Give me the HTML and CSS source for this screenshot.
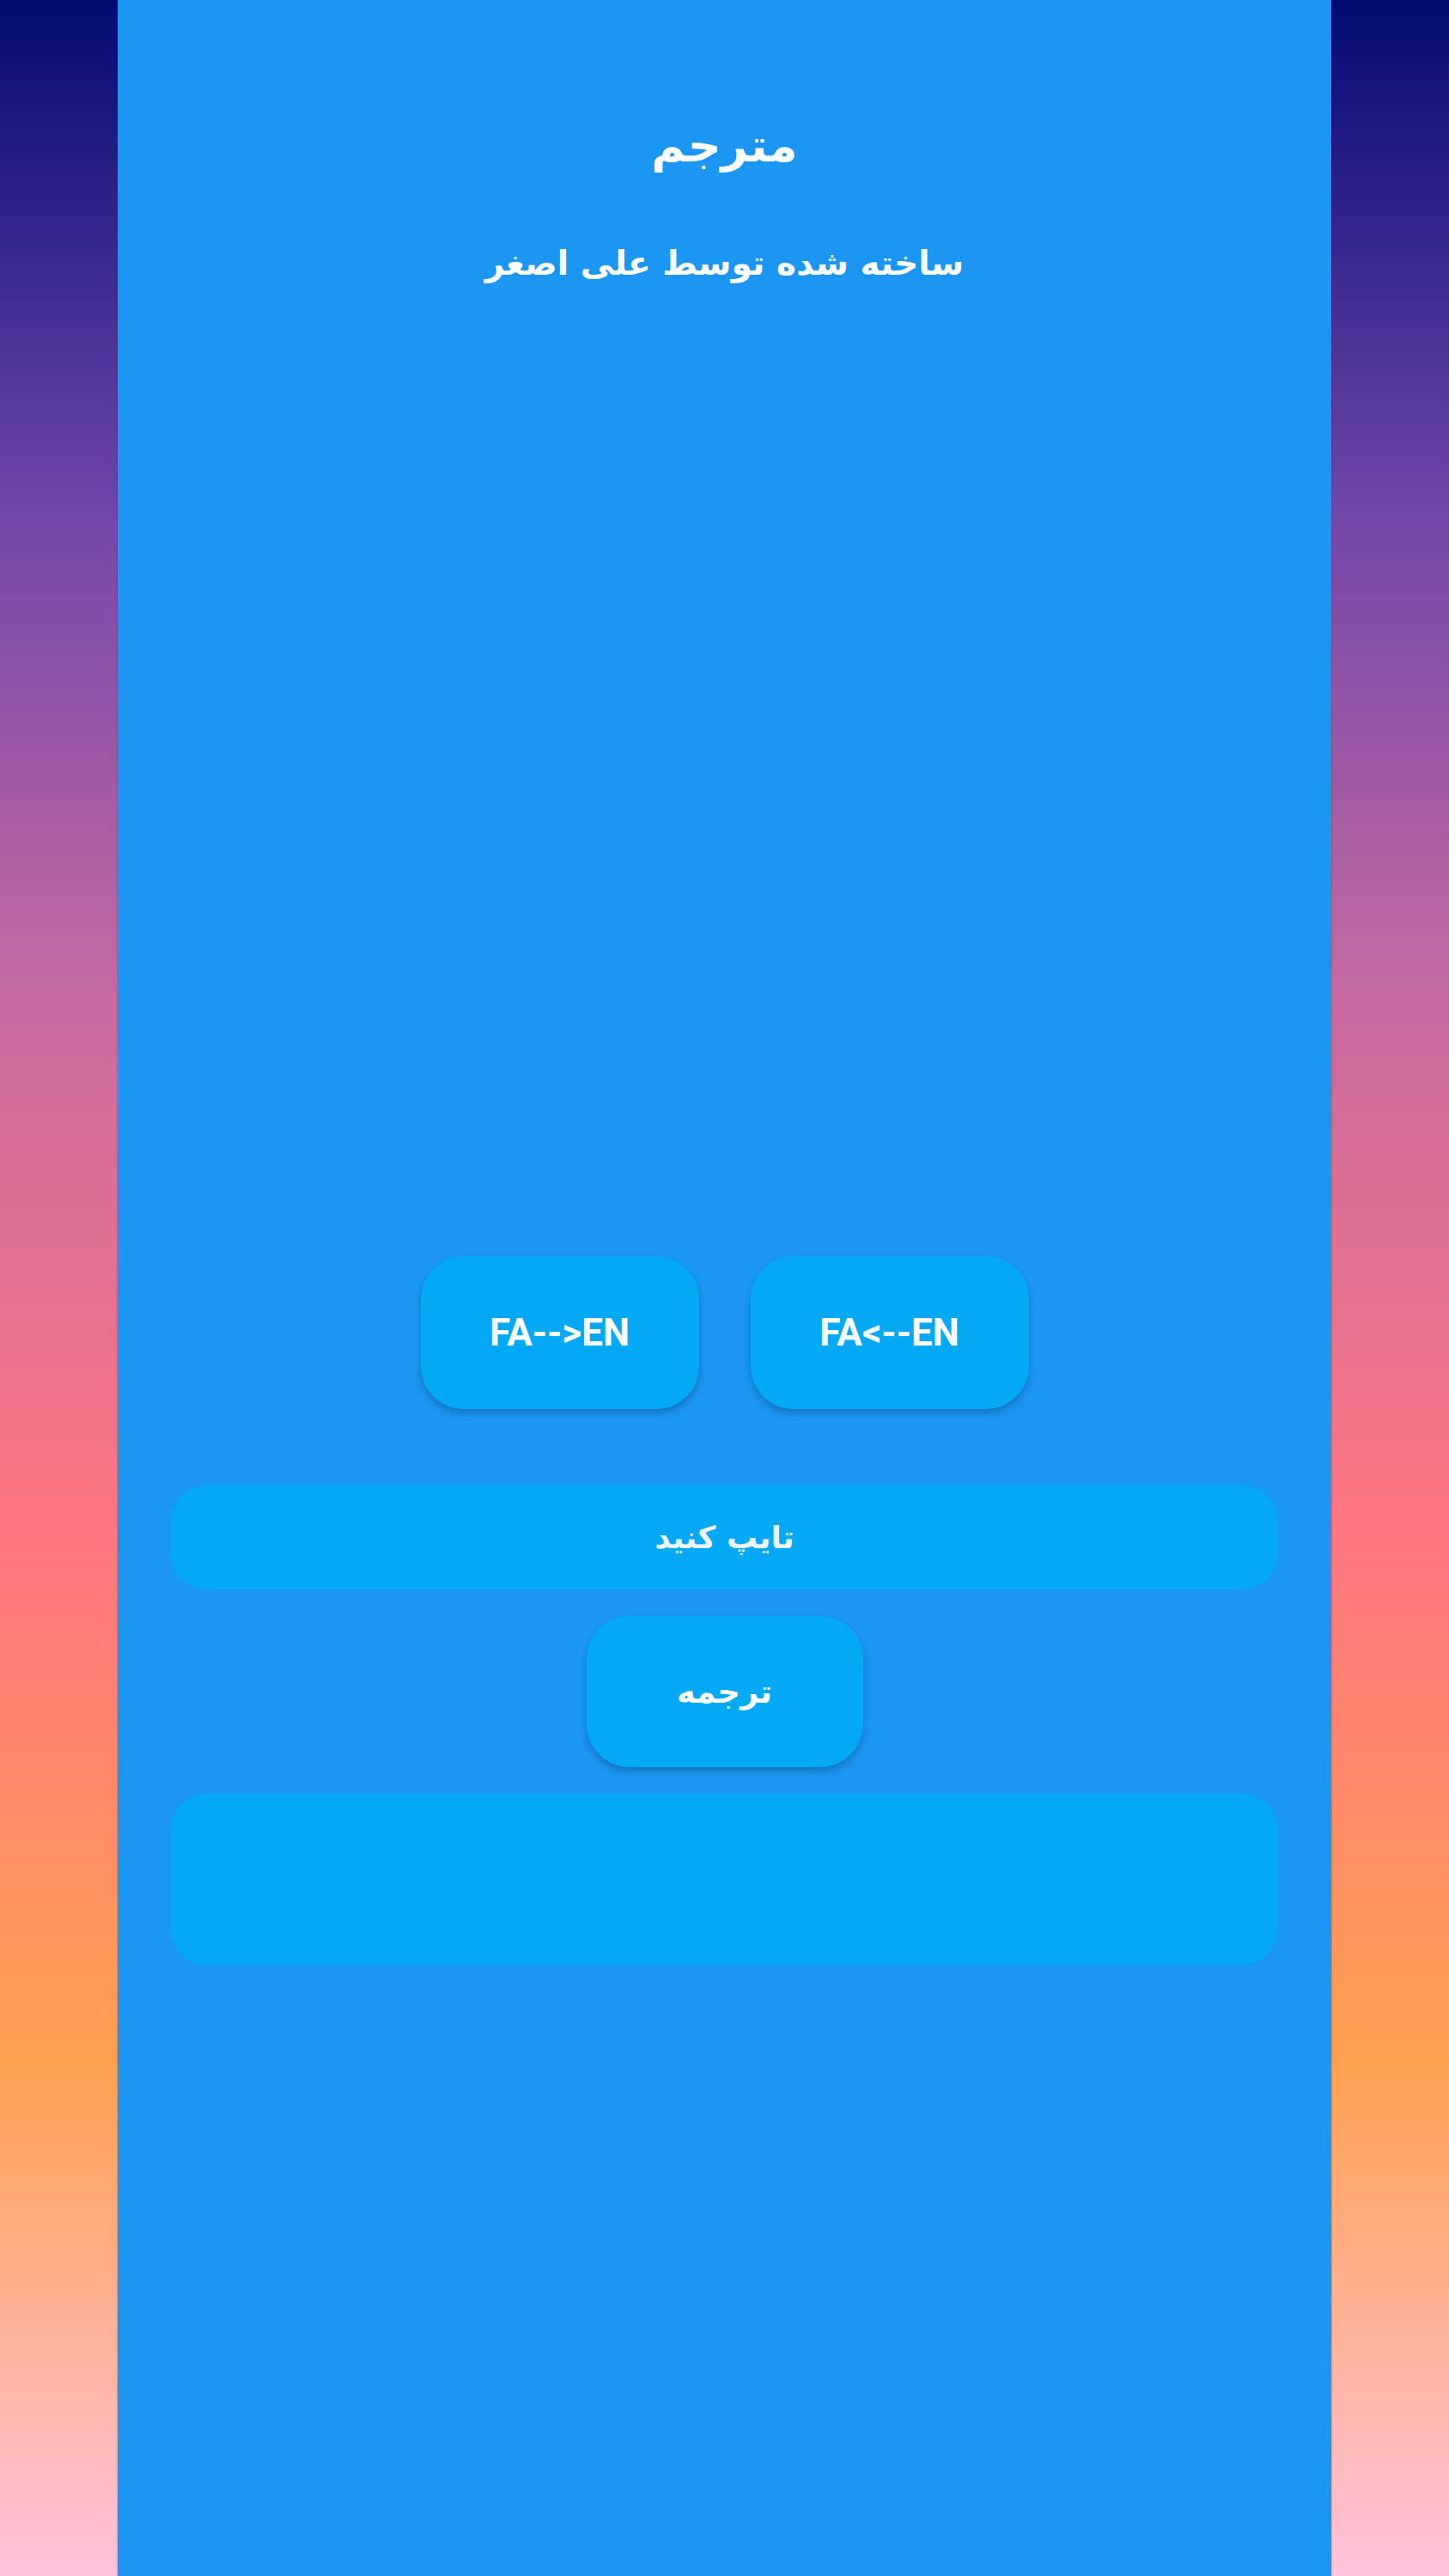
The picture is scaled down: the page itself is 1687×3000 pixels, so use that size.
FILE: index.html
```html
<!DOCTYPE html>
<html lang="fa" dir="rtl">
  <head>
    <meta charset="UTF-8" />
    <meta name="viewport" content="width=device-width, initial-scale=1.0" />
    <title>مترجم</title>
    <link rel="stylesheet" href="styles.css">
  </head>
  <body>
    <div class="app">
      <h1 class="title">مترجم</h1>
      <p class="subtitle">ساخته شده توسط علی اصغر</p>

      <div class="modes" dir="ltr">
        <button type="button" class="btn mode">FA--&gt;EN</button>
        <button type="button" class="btn mode">FA&lt;--EN</button>
      </div>

      <input class="field" id="src" type="text" placeholder="تایپ کنید" />

      <button type="button" class="btn translate">ترجمه</button>

      <div class="result" id="out"></div>
    </div>
  </body>
</html>
```

FILE: styles.css
```css
body {
  margin: 0;
  min-height: 3000px;
  background: linear-gradient(
    to bottom,
    #020b73 0%,
    #7147aa 20%,
    #c66aa1 38.5%,
    #ff7680 60%,
    #ffa050 80%,
    #ffc2dc 100%
  );
  font-family: "DejaVu Sans", "Noto Sans", sans-serif;
}
.app {
  width: 1413px;
  min-height: 3000px;
  margin: 0 auto;
  background: #1b96f3;
  box-shadow: 0 0 2px rgba(0, 0, 0, 0.35);
  padding: 130px 62px 0;
  box-sizing: border-box;
  display: flex;
  flex-direction: column;
  align-items: center;
}
.title {
  margin: 0;
  color: white;
  font-size: 54px;
  line-height: 80px;
  font-weight: bold;
}
.subtitle {
  margin: 62px 0 0;
  color: white;
  font-size: 39px;
  line-height: 70px;
  font-weight: bold;
}
.modes {
  display: flex;
  gap: 60px;
  margin-top: 1121px;
}
.btn {
  border: none;
  background: #03a9f4;
  color: white;
  font-weight: bold;
  cursor: pointer;
  box-shadow: 0 5px 8px rgba(0, 0, 0, 0.22);
}
.mode {
  width: 324px;
  height: 178px;
  border-radius: 50px;
  font-family: Roboto, "Liberation Sans", sans-serif;
  font-size: 44px;
}
.field {
  width: 100%;
  height: 121px;
  margin-top: 89px;
  border: none;
  border-radius: 42px;
  background: #03a9f4;
  color: white;
  text-align: center;
  font-family: "DejaVu Sans", sans-serif;
  font-size: 36px;
  font-weight: bold;
  outline: none;
  box-sizing: border-box;
}
.field::placeholder {
  color: #eef4fb;
}
.translate {
  width: 322px;
  height: 176px;
  margin-top: 31px;
  border-radius: 50px;
  font-family: "DejaVu Sans", sans-serif;
  font-size: 37px;
}
.result {
  width: 100%;
  height: 199px;
  margin-top: 31px;
  border-radius: 42px;
  background: #03a9f4;
}
```
